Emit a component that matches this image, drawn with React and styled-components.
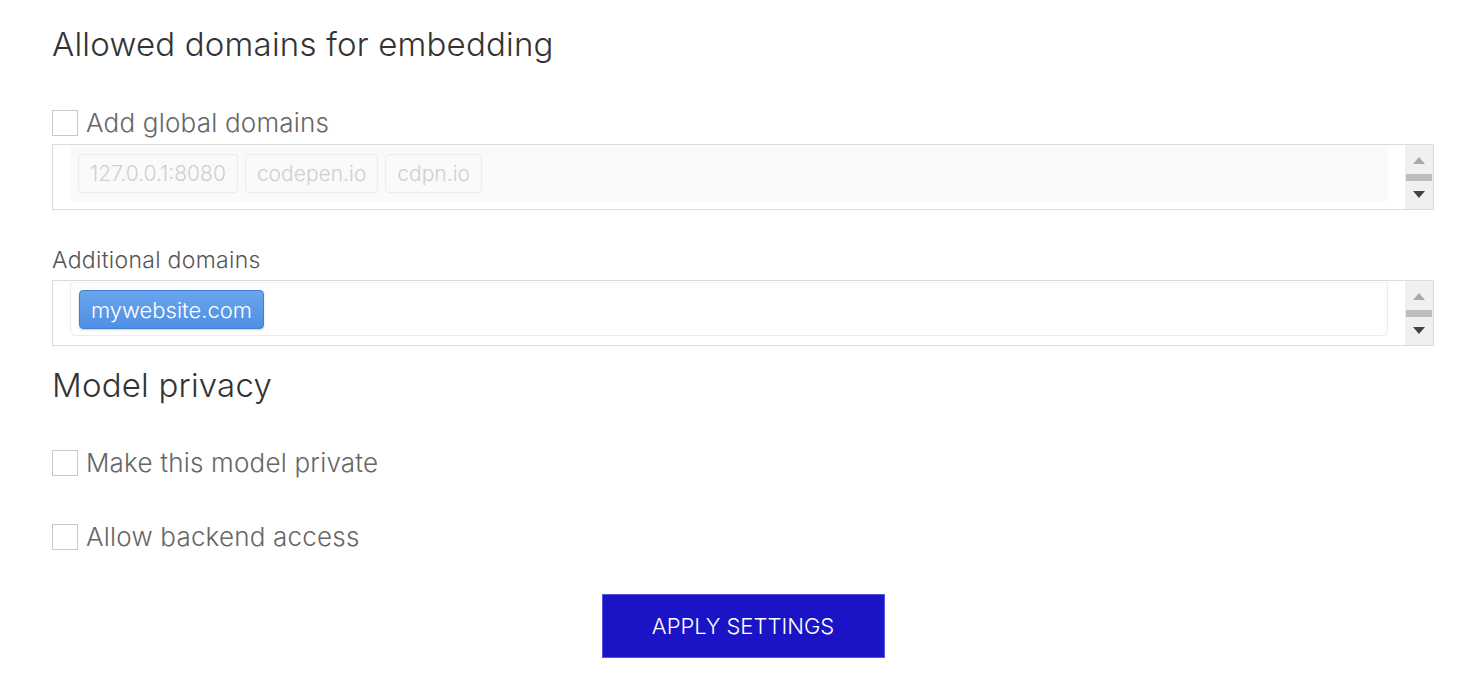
import React from "react";
import styled, { createGlobalStyle } from "styled-components";

const Global = createGlobalStyle`
  body {
    margin: 0;
    background: #fff;
    font-family: Inter, "Open Sans", sans-serif;
    font-weight: 300;
  }
`;

function App() {
  return (
    <Page>
      <Global />
      <Heading>Allowed domains for embedding</Heading>
      <CheckRow top="44px">
        <Box />
        <CheckLabel>Add global domains</CheckLabel>
      </CheckRow>
      <TagField disabled>
        <TagArea disabled>
          <Tag muted>127.0.0.1:8080</Tag>
          <Tag muted>codepen.io</Tag>
          <Tag muted>cdpn.io</Tag>
        </TagArea>
        <ScrollBar>
          <Arrow up />
          <Thumb />
          <Arrow />
        </ScrollBar>
      </TagField>
      <FieldLabel>Additional domains</FieldLabel>
      <TagField>
        <TagArea>
          <Tag>mywebsite.com</Tag>
        </TagArea>
        <ScrollBar>
          <Arrow up />
          <Thumb />
          <Arrow />
        </ScrollBar>
      </TagField>
      <Heading top="19px">Model privacy</Heading>
      <CheckRow top="43px">
        <Box />
        <CheckLabel>Make this model private</CheckLabel>
      </CheckRow>
      <CheckRow top="44px">
        <Box />
        <CheckLabel>Allow backend access</CheckLabel>
      </CheckRow>
      <Actions>
        <ApplyButton>APPLY SETTINGS</ApplyButton>
      </Actions>
    </Page>
  );
}

export default App;

const Page = styled.div`
  display: flex;
  flex-direction: column;
  width: 1382px;
  padding: 0 0 0 52px;
`;

const Heading = styled.h2`
  margin: ${(p) => p.top || "24px"} 0 0;
  font-size: 33px;
  font-weight: 300;
  line-height: 40px;
  color: #333;
  letter-spacing: 0.2px;
`;

const CheckRow = styled.label`
  display: flex;
  align-items: center;
  gap: 8px;
  margin-top: ${(p) => p.top};
  height: 30px;
`;

const Box = styled.span`
  width: 24px;
  height: 24px;
  border: 1px solid #c8c8c8;
  background: #fff;
`;

const CheckLabel = styled.span`
  font-size: 26px;
  color: #666;
  line-height: 30px;
  letter-spacing: 0.2px;
`;

const FieldLabel = styled.div`
  margin-top: 36px;
  font-size: 23px;
  color: #555;
  line-height: 28px;
  letter-spacing: 0.3px;
`;

const TagField = styled.div`
  display: flex;
  margin-top: 6px;
  height: 64px;
  border: 1px solid #dcdcdc;
  padding-left: 17px;
`;

const TagArea = styled.div`
  flex: 1;
  display: flex;
  gap: 7px;
  align-items: flex-start;
  margin-top: 1px;
  height: ${(p) => (p.disabled ? "56px" : "54px")};
  padding: 8px 8px 0;
  box-sizing: border-box;
  border-radius: 0 0 6px 6px;
  background: ${(p) => (p.disabled ? "#fafafa" : "#fff")};
  border: ${(p) => (p.disabled ? "none" : "1px solid #ececec")};
  border-top: none;
  box-shadow: ${(p) => (p.disabled ? "none" : "inset 0 1px 2px rgba(0,0,0,0.06)")};
`;

const Tag = styled.span`
  height: 39px;
  box-sizing: border-box;
  padding: 0 11px;
  display: flex;
  align-items: center;
  font-size: ${(p) => (p.muted ? "21px" : "22px")};
  border-radius: 4px;
  color: ${(p) => (p.muted ? "#cfcfcf" : "#fff")};
  border: 1px solid ${(p) => (p.muted ? "#ececec" : "#3f7fd6")};
  background: ${(p) =>
    p.muted ? "#fafafa" : "linear-gradient(#6aa6ee, #4f8fe3)"};
  box-shadow: ${(p) => (p.muted ? "none" : "0 1px 2px rgba(0,0,0,0.2)")};
`;

const ScrollBar = styled.div`
  width: 28px;
  margin-left: 17px;
  background: #f0f0f0;
  display: flex;
  flex-direction: column;
  align-items: center;
  padding-top: 12px;
  gap: 10px;
`;

const Arrow = styled.span`
  width: 0;
  height: 0;
  border-left: 6px solid transparent;
  border-right: 6px solid transparent;
  ${(p) =>
    p.up
      ? "border-bottom: 7px solid #a8a8a8;"
      : "border-top: 7px solid #444;"}
`;

const Thumb = styled.span`
  width: 26px;
  height: 7px;
  background: #bdbdbd;
`;

const Actions = styled.div`
  display: flex;
  justify-content: center;
  margin-top: 42px;
`;

const ApplyButton = styled.button`
  width: 283px;
  height: 64px;
  border: 1px solid #5a55e0;
  background: #1b14c6;
  color: #fff;
  font-family: Inter, "Open Sans", sans-serif;
  font-weight: 300;
  font-size: 22px;
  cursor: pointer;
`;
